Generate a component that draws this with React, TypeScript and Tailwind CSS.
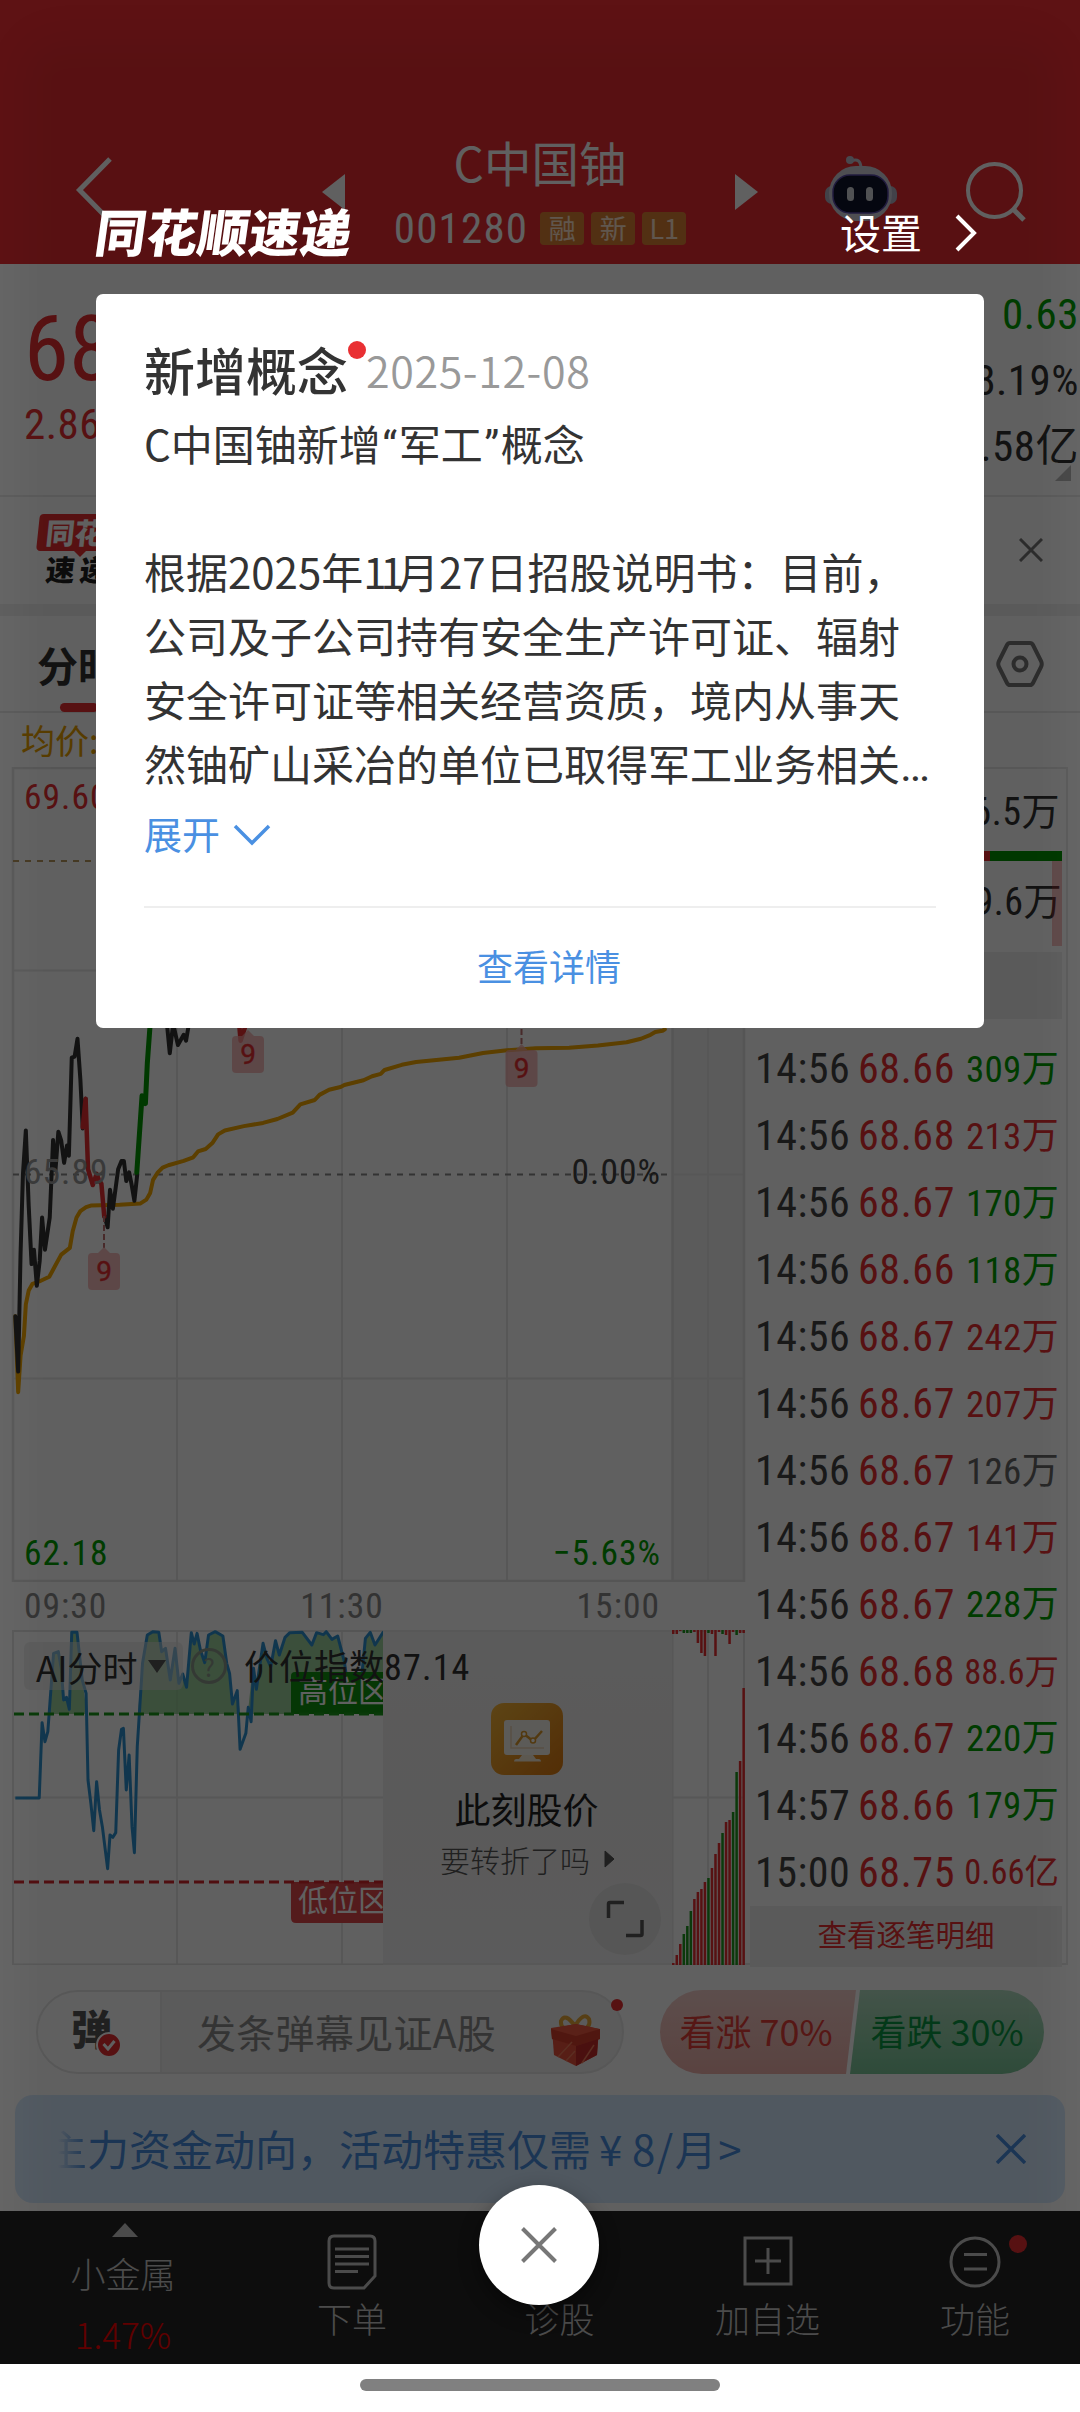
import React from "react";
import clsx from "clsx";

const trades = [
  { time: "14:56", price: "68.66", vol: "309", unit: "万", color: "text-[#00a000]" },
  { time: "14:56", price: "68.68", vol: "213", unit: "万", color: "text-[#e93033]" },
  { time: "14:56", price: "68.67", vol: "170", unit: "万", color: "text-[#00a000]" },
  { time: "14:56", price: "68.66", vol: "118", unit: "万", color: "text-[#00a000]" },
  { time: "14:56", price: "68.67", vol: "242", unit: "万", color: "text-[#e93033]" },
  { time: "14:56", price: "68.67", vol: "207", unit: "万", color: "text-[#e93033]" },
  { time: "14:56", price: "68.67", vol: "126", unit: "万", color: "text-[#666]" },
  { time: "14:56", price: "68.67", vol: "141", unit: "万", color: "text-[#e93033]" },
  { time: "14:56", price: "68.67", vol: "228", unit: "万", color: "text-[#00a000]" },
  { time: "14:56", price: "68.68", vol: "88.6", unit: "万", color: "text-[#e93033]" },
  { time: "14:56", price: "68.67", vol: "220", unit: "万", color: "text-[#00a000]" },
  { time: "14:57", price: "68.66", vol: "179", unit: "万", color: "text-[#00a000]" },
  { time: "15:00", price: "68.75", vol: "0.66", unit: "亿", color: "text-[#e93033]" },
];

const RED = "#e93033";
const GREEN = "#1f9a1f";

// heights of the auction volume bars, left to right
const bars = [2, 10, 21, 31, 39, 54, 66, 73, 76, 83, 87, 97, 111, 122, 132, 143, 145, 153, 193, 204, 277];
const barColors = "rrrgggrrrrgrrrgrrggrr";
const drops = [4, 4, 1, 3, 3, 3, 2, 13, 23, 26, 3, 4, 26, 2, 4, 5, 14, 2, 5, 3, 3];
const dropColors = "rrrgggrrrrgrrrgrrrgrr";

const num = "font-['Roboto','Noto_Sans_CJK_SC',sans-serif] font-normal [font-stretch:75%]";

const Marker = ({ x, y }: { x: number; y: number }) => (
  <g>
    <path
      d={`M${x - 12} ${y - 15}h6l6-6l6 6h6q4 0 4 4v29q0 4-4 4h-24q-4 0-4-4v-29q0-4 4-4z`}
      fill="#f4a9a9"
      fillOpacity=".75"
    />
    <text x={x} y={y + 13} textAnchor="middle" fontSize="28" fontFamily="Roboto, sans-serif" fill={RED} stroke={RED} strokeWidth=".4">
      9
    </text>
  </g>
);

const Header = () => (
  <header className="flex h-[264px] items-start bg-[#ec2d33]">
    <svg className="ml-[70px] mt-[150px] h-[80px] w-[50px]" viewBox="0 0 50 80" fill="none">
      <path d="M40 9L9.500 40L40 71" stroke="#fff" strokeWidth="5" />
    </svg>
    <div className="ml-[202px] flex w-[436px] items-start justify-between">
      <svg className="mt-[174px] h-9 w-[23px]" viewBox="0 0 23 36">
        <path d="M23 0v36L0 18z" fill="#fff" />
      </svg>
      <div className="mt-[137px] flex flex-col items-center text-white">
        <div className="text-[47.500px] leading-[50px]">C中国铀</div>
        <div className="mt-[14px] flex items-center gap-[7px]">
          <span className={clsx(num, "mr-[5px] text-[43px] leading-[54px] tracking-[1.2px]")}>001280</span>
          {["融", "新", "L1"].map((t) => (
            <span
              key={t}
              className="flex h-[33px] w-[44px] items-center justify-center rounded-[4px] bg-[#dd8336] pb-[2px] text-[27px] leading-none text-[#ffe6d0]"
            >
              {t}
            </span>
          ))}
        </div>
      </div>
      <svg className="mt-[174px] h-9 w-[23px]" viewBox="0 0 23 36">
        <path d="M0 0v36L23 18z" fill="#fff" />
      </svg>
    </div>
    <svg className="ml-[66px] mt-[150px] h-[76px] w-[76px]" viewBox="0 0 76 76" fill="none">
      <path d="M27 11q10-4 10 8" stroke="#c9c9d6" strokeWidth="3" />
      <circle cx="26" cy="10" r="4" fill="#c0c0d0" />
      <rect x="1" y="36" width="72" height="18" rx="7" fill="#b2b2c4" />
      <rect x="5" y="16" width="63" height="55" rx="27" fill="#d0d0dc" />
      <rect x="9" y="25" width="55" height="38" rx="17" fill="#10142c" stroke="#5a4aa8" strokeWidth="1.500" />
      <rect x="23" y="37" width="7" height="14" rx="3.500" fill="#d8dadf" />
      <rect x="42" y="37" width="7" height="14" rx="3.500" fill="#d8dadf" />
    </svg>
    <svg className="ml-[66px] mt-[158px] h-16 w-16" viewBox="0 0 64 64" fill="none">
      <circle cx="28.500" cy="32.500" r="26.500" stroke="#fff" strokeWidth="4" />
      <path d="M47 51l11 11" stroke="#fff" strokeWidth="5" />
    </svg>
  </header>
);

const Quote = () => (
  <section className="bg-white">
    <div className="flex h-[233px] justify-between border-b-2 border-[#ececec] pl-[24px] pr-[26px]">
      <div className={clsx(num, "text-[#e93033]")}>
        <div className="mt-[33px] text-[91px] leading-[104px]">68.75</div>
        <div className="mt-[-2px] text-[43px] leading-[50px] tracking-[0.500px]">2.86 4.34%</div>
      </div>
      <div className={clsx(num, "-mr-[25px] mt-[17px] flex flex-col items-end text-[43px] leading-[66px] tracking-[0.500px] text-[#333]")}>
        <span className="text-[#00a000]">0.63</span>
        <span>18.19%</span>
        <span>38.58亿</span>
        <svg className="-mt-[14px] mr-[8px] h-4 w-4" viewBox="0 0 16 16">
          <path d="M16 0v16H0z" fill="#b9b9b9" />
        </svg>
      </div>
    </div>
    <div className="flex h-[107px] items-start justify-between pl-[38px] pr-[37px]">
      <div className="mt-[17px] text-[29px] font-black leading-none">
        <div className="flex h-[37px] w-[110px] -skew-x-6 items-center rounded-[4px] bg-[#e93033] pb-[3px] pl-[8px] text-white">
          同花顺
        </div>
        <svg className="ml-[36px] h-[6px] w-[12px]" viewBox="0 0 12 6">
          <path d="M0 0h12L6 6z" fill={RED} />
        </svg>
        <div className="-mt-[3px] ml-[8px] flex -skew-x-6 gap-[5px] text-[#222]">
          <span>速</span>
          <span>递</span>
        </div>
      </div>
      <svg className="mt-[41px] h-[24px] w-[24px]" viewBox="0 0 24 24">
        <path d="M1 1l22 22M23 1L1 23" stroke="#777" strokeWidth="3" />
      </svg>
    </div>
    <div className="h-3 bg-[#f0f0f0]" />
    <div className="flex h-[97px] items-start justify-between border-b-2 border-[#e8e8e8] pl-[37px] pr-[36px]">
      <div className="mt-[25px]">
        <div className="text-[41px] font-bold leading-[46px] text-[#333]">分时</div>
        <div className="ml-[23px] mt-[16px] h-[9px] w-[38px] rounded-full bg-[#e93033]" />
      </div>
      <svg className="mt-[24px] h-[48px] w-[48px]" viewBox="0 0 48 48" fill="none" stroke="#777" strokeWidth="4">
        <path d="M14 3h20q2 0 3 2l8 16q1.500 3 0 6l-8 16q-1 2-3 2H14q-2 0-3-2L3 27q-1.500-3 0-6l8-16q1-2 3-2z" />
        <circle cx="24" cy="24" r="6.500" />
      </svg>
    </div>
    <div className="flex h-[54px] items-center pl-[21px] text-[34px] leading-none text-[#e8a000]">均价:68.04</div>
  </section>
);

const PriceChart = () => (
  <div className="relative h-[815px]">
    <svg className="block h-[815px] w-[746px]" viewBox="0 767 746 815" fill="none">
      <rect x="672" y="767" width="72" height="814" fill="#f2f2f2" />
      <path
        d="M13 970.500H744M13 1378.500H744M672 1174.500H744M177 767V1581M342 767V1581M507 767V1581M708 767V1581"
        stroke="#e8e8e8"
        strokeWidth="2"
      />
      <path d="M13 768H744V1581H13zM672.500 767V1581" stroke="#e4e4e4" strokeWidth="2.500" />
      <path d="M13 861H672" stroke="#b99a60" strokeWidth="2" strokeDasharray="6 6" />
      <path d="M13 1174.500H668" stroke="#8a8a8a" strokeWidth="2" strokeDasharray="6 6" />
      <g transform="translate(0 1000) scale(.4783 .3953)" strokeLinejoin="round" strokeLinecap="round">
        <path
          vectorEffect="non-scaling-stroke"
          stroke="#f5a700"
          strokeWidth="4"
          d="M32 800L38 992L43 900L50 850L54 770L60 735L68 718L82 712L103 700L112 680L128 644L146 627L152 585L160 550L168 534L180 524L190 520L250 518L293 515L306 505L314 488L320 455L330 436L340 424L352 418L384 407L404 398L414 383L430 377L444 362L456 340L470 330L510 319L550 311L580 301L612 285L628 264L658 253L668 240L688 227L712 220L720 215L760 203L778 193L796 187L804 177L840 164L870 157L960 146L1010 134L1060 127L1120 122L1190 121L1250 115L1310 107L1340 98L1360 88L1370 81L1385 78L1390 74"
        />
        <path
          vectorEffect="non-scaling-stroke"
          stroke="#333"
          strokeWidth="4"
          d="M32 800L38 940L43 640L48 440L54 330L60 520L66 668L71 632L77 723L83 660L88 550L94 632L104 550L111 354L116 430L122 333L128 356L134 412L140 368L144 394L150 146L156 143L162 98L168 200L173 325L179 250M218 545L225 575L230 480L236 528L247 428L254 407L259 407L264 458L270 436L275 466L281 508L287 440M349 60L355 135L362 60L372 114L384 88L389 103L395 60"
        />
        <path vectorEffect="non-scaling-stroke" stroke={RED} strokeWidth="4.500" d="M173 322L179 250L184 428L194 468L202 440L207 456L212 465L218 548M500 60L503 103L512 70" />
        <path vectorEffect="non-scaling-stroke" stroke="#009a00" strokeWidth="5" d="M286 436L297 242L304 262L308 160L314 60" />
      </g>
      <path d="M104 1216v32M521.500 1020v25" stroke="#c07070" strokeWidth="2" strokeDasharray="6 3" />
      <Marker x={104} y={1268} />
      <Marker x={248} y={1051} />
      <Marker x={521.5} y={1065} />
    </svg>
    <div className={clsx(num, "absolute inset-0 text-[35.500px] leading-[40px] tracking-[1px]")}>
      <span className="absolute left-[24px] top-[10px] text-[#e93033]">69.60</span>
      <span className="absolute left-[24px] top-[385px] text-[#999]">65.89</span>
      <span className="absolute right-[83px] top-[385px] text-[#444]">0.00%</span>
      <span className="absolute left-[24px] top-[766px] text-[#00a000]">62.18</span>
      <span className="absolute right-[83px] top-[766px] text-[#00a000]">−5.63%</span>
    </div>
  </div>
);

const IndexChart = () => (
  <div className="relative flex h-[335px]">
    <svg className="block h-[335px] w-[383px] shrink-0" viewBox="0 1630 383 335" fill="none">
      <path d="M13 1797.500H383M177 1631V1965M342 1631V1965" stroke="#e8e8e8" strokeWidth="2" />
      <path d="M383 1631H13V1964.500H383" stroke="#e4e4e4" strokeWidth="2" />
      <g transform="translate(0 1600) scale(.4783 .3333)" strokeLinejoin="round">
        <path
          d="M104 342L112 160L122 155L128 205L133 300L139 297L145 328L150 97L161 97L166 140L172 240L182 342zM288 342L298 190L308 105L320 95L332 97L338 155L346 145L356 240L366 145L374 250L382 222L390 262L400 98L406 132L412 100L419 150L428 188L436 105L450 95L466 108L474 190L480 220L486 312L496 272L502 342zM518 342L528 205L536 268L550 130L558 175L566 200L576 122L584 165L596 112L606 98L632 97L652 135L662 98L676 104L682 95L694 118L706 108L720 185L728 270L750 320L764 115L774 97L784 135L802 95V342z"
          fill="#7fc27f"
          fillOpacity=".75"
        />
        <path
          vectorEffect="non-scaling-stroke"
          stroke="#2f92d0"
          strokeWidth="3"
          d="M32 594L82 594L88 368L94 425L100 395L112 160L122 155L128 205L133 300L139 292L145 328L150 97L161 97L172 240L180 280L184 540L190 610L196 692L202 545L208 630L214 680L225 806L230 705L236 712L242 698L248 450L254 388L258 385L264 570L270 465L276 680L281 758L287 440L298 190L308 105L320 95L332 97L338 155L346 145L356 240L366 145L374 250L382 222L390 262L400 98L406 132L412 100L419 150L428 188L436 105L450 95L466 108L474 190L480 220L486 312L496 272L502 448L514 400L519 322L525 365L530 205L536 268L550 130L558 175L566 200L576 122L584 165L596 112L606 98L632 97L652 135L662 98L676 104L682 95L694 118L706 108L720 185L728 270L750 320L764 115L774 97L784 135L802 95"
        />
      </g>
      <path d="M291 1714V1676q0-4 4-4H383V1714z" fill="#109410" />
      <path d="M291 1882V1918q0 5 5 5H383V1882z" fill="#e2494d" />
      <path d="M14 1714H383" stroke="#1b9a1b" strokeWidth="3" strokeDasharray="10 5" />
      <path d="M14 1882H383" stroke="#d8262c" strokeWidth="3" strokeDasharray="10 5" />
    </svg>
    <div className="absolute left-[298px] top-[38px] w-[85px] overflow-hidden whitespace-nowrap text-[30px] leading-[42px] text-white">
      高位区
    </div>
    <div className="absolute left-[298px] top-[247px] w-[85px] overflow-hidden whitespace-nowrap text-[30px] leading-[42px] text-white">
      低位区
    </div>
    <div className="flex w-[289px] shrink-0 flex-col items-center border-y-2 border-[#ececec] bg-gradient-to-b from-[#f3f3f3] via-[#f1efef] to-[#f3f3f4] pr-[2px]">
      <svg className="mt-[71px] h-[72px] w-[72px]" viewBox="0 0 72 72" fill="none">
        <defs>
          <linearGradient id="gold" x1="0" y1="0" x2="1" y2="1">
            <stop offset="0" stopColor="#f6b73a" />
            <stop offset="1" stopColor="#dd7a12" />
          </linearGradient>
        </defs>
        <rect width="72" height="72" rx="13" fill="url(#gold)" />
        <rect x="13" y="17" width="46" height="35" rx="3" fill="#f6f2ec" />
        <path d="M31 52h11l3 4h3q2 0 2 2.500h-27q0-2.500 2-2.500h3z" fill="#f6ead8" />
        <path d="M20 23v22h33" stroke="#ecd6b4" strokeWidth="1.500" />
        <path d="M25 42l8-11l9 7l9-10" stroke="#dd9a2c" strokeWidth="2.500" />
        <circle cx="33" cy="31" r="2.500" fill="#fff" stroke="#dd9a2c" strokeWidth="1.500" />
        <circle cx="42" cy="37.500" r="2.500" fill="#fff" stroke="#dd9a2c" strokeWidth="1.500" />
      </svg>
      <div className="mt-[9px] text-[36px] leading-[48px] text-[#222]">此刻股价</div>
      <div className="ml-[2px] mt-[5px] flex items-center gap-[14px] text-[30px] font-light leading-[44px] text-[#555]">
        要转折了吗
        <svg className="h-[18px] w-[11px]" viewBox="0 0 11 18">
          <path d="M1 1l9 8l-9 8z" fill="#555" stroke="#555" />
        </svg>
      </div>
    </div>
    <div className="absolute left-[589px] top-[253px] flex size-[72px] items-center justify-center rounded-full bg-[#e6e6e6]">
      <svg className="h-[38px] w-[38px]" viewBox="0 0 38 38" fill="none" stroke="#555" strokeWidth="3.500">
        <path d="M2.500 18V4q0-1.500 1.500-1.500H18M36 20V34q0 1.500-1.500 1.500H20" />
      </svg>
    </div>
    <svg className="block h-[335px] w-[73px] shrink-0" viewBox="0 0 73 335">
      <path d="M0 167.500H72M36 0V335M.5 0V335" stroke="#e8e8e8" strokeWidth="2" />
      <path d="M0 1H74M0 334.500H74M72 0V335" stroke="#e4e4e4" strokeWidth="2" />
      {bars.map((h, i) => (
        <rect key={i} x={i * 3.52} y={335 - h} width="2.500" height={h} fill={barColors[i] === "r" ? RED : GREEN} />
      ))}
      {drops.map((h, i) => (
        <rect key={i} x={i * 3.52} y="0" width="2.500" height={h} fill={dropColors[i] === "r" ? RED : GREEN} />
      ))}
    </svg>
    <div className="absolute left-[24px] top-[12px] flex h-[48px] items-center text-[35px] leading-none text-[#333]">
      <div className="flex h-[48px] w-[159px] items-center gap-[10px] rounded-[6px] bg-[#e4e4e4]/50 pl-[12px]">
        AI分时
        <svg className="h-[13px] w-[18px]" viewBox="0 0 18 13">
          <path d="M0 0h18L9 13z" fill="#555" />
        </svg>
      </div>
      <div className="ml-[8px] flex size-[36px] items-center justify-center rounded-full border-[3px] border-[#8d9a8d] text-[25px] text-[#8d9a8d]">
        ?
      </div>
      <div className="ml-[17px] whitespace-nowrap">
        价位指数<span className={clsx(num, "text-[36px] tracking-[1.200px]")}>87.14</span>
      </div>
    </div>
  </div>
);

const TradeList = () => (
  <aside className="w-[324px] border-r-2 border-b-2 border-t-2 border-[#e8e8e8] pl-[6px] pr-[4px] text-[#333]">
    <div className={clsx(num, "flex h-[82px] items-center justify-end pr-[2px] pt-[5px] text-[38px] tracking-[0.500px]")}>266.5万</div>
    <div className="flex h-[10px]">
      <div className="w-[240px] bg-[#e93033]" />
      <div className="flex-1 bg-[#009400]" />
    </div>
    <div className="flex h-[85px] justify-end">
      <div className={clsx(num, "flex h-[82px] items-center text-[38px] tracking-[0.500px]")}>139.6万</div>
      <div className="-ml-[10px] w-[10px] bg-[#e93033]/30" />
    </div>
    <div className="mt-[6px] h-[67px] bg-[#f0f0f0]" />
    <div className="mt-[17px]">
      {trades.map((t, idx) => (
        <div key={idx} className={clsx(num, "flex h-[66.95px] items-center text-[42px] leading-none")}>
          <span className="w-[102px] pl-[5px] tracking-[0.500px] text-[#444]">{t.time}</span>
          <span className="w-[100px] pl-[6px] tracking-[0.600px] text-[#e93033]">{t.price}</span>
          <span
            className={clsx(
              t.color,
              "flex-1 whitespace-nowrap pr-[3px] text-right",
              t.vol.length > 3 ? "text-[34.500px]" : "text-[37px] tracking-[0.300px]"
            )}
          >
            {t.vol}
            {t.unit}
          </span>
        </div>
      ))}
    </div>
    <div className="flex h-[61px] items-center justify-center bg-[#f0f0f0] pb-[5px] text-[29.500px] leading-none text-[#e93033]">
      查看逐笔明细
    </div>
  </aside>
);

const DanmuBar = () => (
  <div className="flex h-[130px] items-start justify-between pl-[36px] pr-[36px] pt-[25px]">
    <div className="relative flex h-[84px] w-[588px] items-center rounded-full border-2 border-[#e9e9e9] bg-[#f2f2f2]">
      <div className="flex h-full w-[124px] items-center rounded-l-full border-r-2 border-[#ebebeb] bg-white pl-[33px]">
        <span className="relative -mt-[10px] text-[41px] font-black leading-none text-[#555]">
          弹
          <span className="absolute -bottom-[10px] -right-[10px] flex size-[26px] items-center justify-center rounded-full border-2 border-white bg-[#e93033]">
            <svg className="h-[12px] w-[14px]" viewBox="0 0 14 12" fill="none">
              <path d="M1.500 5l4.500 5l6.500-8" stroke="#fff" strokeWidth="3" />
            </svg>
          </span>
        </span>
      </div>
      <span className="-mt-[2px] ml-[35px] text-[39px] leading-none tracking-[0.300px] text-[#8c8c8c]">发条弹幕见证A股</span>
      <svg className="absolute left-[512px] top-[21px] h-[54px] w-[52px]" viewBox="0 0 52 54" fill="none">
        <path d="M25 16Q10 18 11 8Q15-1 25 13Q34-2 39 6Q42 18 25 16z" stroke="#e8a83a" strokeWidth="4" />
        <path d="M2 16l24-5l23 5l-2 26L26 53L4 42z" fill="#e8503c" />
        <path d="M1 15l25-4l24 5v10L26 33L2 26z" fill="#ef5a42" />
        <path d="M1 16l25 7l24-7v10L26 33L2 26z" fill="#d8402e" />
        <path d="M26 33L48 26l-1 16L26 53z" fill="#c62f2a" />
        <path d="M8 44l14-15M16 48l9-10M32 50l12-18" stroke="#f27a5a" strokeWidth="1.500" />
      </svg>
      <span className="absolute right-[-1px] top-[7px] size-3 rounded-full bg-[#e93033]" />
    </div>
    <div className="flex h-[84px] w-[384px] text-[36px] leading-none">
      <div className="flex flex-1 items-center justify-center rounded-l-full bg-gradient-to-b from-[#f6cfcb] to-[#efb3ad] pb-[4px] pr-[4px] text-[#e5403a] [clip-path:polygon(0_0,100%_0,calc(100%-10px)_100%,0_100%)]">
        看涨&nbsp;70%
      </div>
      <div className="-ml-[6px] flex w-[194px] items-center justify-center rounded-r-full bg-gradient-to-b from-[#b5e0c4] to-[#7cc79a] pb-[4px] text-[#0c9a44] [clip-path:polygon(10px_0,100%_0,100%_100%,0_100%)]">
        看跌&nbsp;30%
      </div>
    </div>
  </div>
);

const Banner = () => (
  <div className="mx-[15px] flex h-[108px] items-center justify-between rounded-[18px] bg-[#d8ebff] pl-[30px] pr-[39px] text-[#4a90e2]">
    <div className="-mt-[2px] flex whitespace-nowrap text-[42px] leading-none">
      <span className="bg-gradient-to-r from-[#4a90e2]/0 from-30% to-[#4a90e2] to-100% bg-clip-text text-transparent">主</span>
      力资金动向，活动特惠仅需
      <span className="w-[41px] pl-[8px]">¥</span>
      <span className="tracking-[1.500px]">8/月&gt;</span>
    </div>
    <svg className="h-[30px] w-[30px]" viewBox="0 0 30 30">
      <path d="M1 1l28 28M29 1L1 29" stroke="#4a90e2" strokeWidth="3.500" />
    </svg>
  </div>
);

const BottomNav = () => (
  <nav className="mt-[8px] flex h-[153px] bg-[#252525] text-[35px] font-light leading-[40px] text-[#c8c8c8]">
    <div className="flex w-[246px] flex-col items-center">
      <svg className="ml-1 mt-[12px] h-[14px] w-[26px]" viewBox="0 0 26 14">
        <path d="M13 0l13 14H0z" fill="#c8c8c8" />
      </svg>
      <span className="mt-[16px]">小金属</span>
      <span className="mt-[21px] text-[35px] text-[#f00]">1.47%</span>
    </div>
    <div className="flex w-[212px] flex-col items-center">
      <svg className="mt-[23px] h-[56px] w-[50px]" viewBox="0 0 50 56" fill="none" stroke="#c8c8c8" strokeWidth="3">
        <path d="M7 2H43q5 0 5 5V42L37 54H7q-5 0-5-5V7q0-5 5-5z" />
        <path d="M8 15H42M8 22.500H42M8 30H42M8 37.500H31" />
      </svg>
      <span className="mt-[8px]">下单</span>
    </div>
    <div className="flex w-[203px] flex-col items-center">
      <span className="mt-[87px]">诊股</span>
    </div>
    <div className="flex w-[213px] flex-col items-center">
      <svg className="mt-[25px] h-[50px] w-[50px]" viewBox="0 0 50 50" fill="none" stroke="#c8c8c8" strokeWidth="3">
        <path d="M2 2H48V48H2zM25 12V38M12 25H38" />
      </svg>
      <span className="mt-[12px]">加自选</span>
    </div>
    <div className="relative flex w-[202px] flex-col items-center">
      <svg className="mt-[25px] h-[52px] w-[52px]" viewBox="0 0 52 52" fill="none" stroke="#c8c8c8" strokeWidth="3">
        <circle cx="26" cy="26" r="24" />
        <path d="M15 18.500H38M15 33H38" />
      </svg>
      <span className="mt-[10px]">功能</span>
      <span className="absolute right-[49px] top-[24px] size-[18px] rounded-full bg-[#e93033]" />
    </div>
  </nav>
);

const Modal = () => (
  <div className="absolute inset-x-0 top-0 h-[2364px] overflow-hidden bg-black/60">
    <div className="absolute inset-x-[20px] bottom-[-60px] top-[36px] rounded-[40px] bg-black/6 blur-[18px]" />
    <div className="relative flex h-[294px] items-start justify-between pl-[92px] pr-[103px] pt-[200px] text-white">
      <div className="origin-bottom -skew-x-8 whitespace-nowrap text-[51px] font-black leading-[60px] tracking-[0.300px]">
        同花顺速递
      </div>
      <div className="mt-px flex items-center gap-[33px] text-[41px] leading-[60px]">
        设置
        <svg className="mt-[4px] h-[38px] w-[22px]" viewBox="0 0 22 38" fill="none">
          <path d="M2 2l17 17L2 36" stroke="#fff" strokeWidth="4" />
        </svg>
      </div>
    </div>
    <div className="relative mx-auto h-[734px] w-[888px] rounded-[7px] bg-white px-[48px] pt-[43px] text-[#333]">
      <div className="flex h-[64px] items-center">
        <span className="text-[51px] font-medium leading-none">新增概念</span>
        <span className="mb-[38px] size-[18px] rounded-full bg-[#e93033]" />
        <span className="text-[43px] font-[350] leading-none tracking-[0.600px] text-[#999]">2025-12-08</span>
      </div>
      <div className="mt-[10px] whitespace-nowrap text-[42px] leading-[64px]">
        <p>
          C中国铀新增<span className="px-[1.500px] font-['Roboto'] leading-none">“</span>军工
          <span className="px-[1.500px] font-['Roboto'] leading-none">”</span>概念
        </p>
        <p className="mt-[64px]">
          根据2025年<span className="-mr-px tracking-[-6px]">11</span>月27日招股说明书：目前，
        </p>
        <p>公司及子公司持有安全生产许可证、辐射</p>
        <p>安全许可证等相关经营资质，境内从事天</p>
        <p>
          然铀矿山采冶的单位已取得军工业务相关
          <span className="font-['Roboto'] text-[45px] leading-none">…</span>
        </p>
      </div>
      <div className="mt-[10px] flex h-[56px] items-center gap-[13px] text-[38px] leading-none text-[#4a90e2]">
        <span>展开</span>
        <svg className="mt-[4px] h-[22px] w-[38px]" viewBox="0 0 38 22" fill="none">
          <path d="M2 2l17 17L36 2" stroke="#4a90e2" strokeWidth="3.500" />
        </svg>
      </div>
      <div className="mt-[45px] h-[2px] bg-[#eee]" />
      <div className="ml-[18px] mt-[33px] text-center text-[36px] leading-[48px] text-[#4a90e2]">查看详情</div>
    </div>
    <button className="absolute left-[479px] top-[2185px] flex size-[120px] items-center justify-center rounded-full bg-white shadow-[0_8px_20px_rgba(0,0,0,0.45)]">
      <svg className="h-[36px] w-[36px]" viewBox="0 0 36 36">
        <path d="M1.500 1.500l33 33M34.500 1.500l-33 33" stroke="#777" strokeWidth="4" />
      </svg>
    </button>
  </div>
);

export default function App() {
  return (
    <div
      lang="zh-CN"
      className="relative h-[2412px] w-[1080px] overflow-hidden bg-white font-['Noto_Sans_CJK_SC',sans-serif]"
    >
      <Header />
      <Quote />
      <main className="flex h-[1198px]">
        <div className="w-[744px]">
          <PriceChart />
          <div
            className={clsx(
              num,
              "flex h-[48px] items-center justify-between pl-[24px] pr-[84px] pt-[2px] text-[35.500px] leading-none tracking-[1px] text-[#8a8a8a]"
            )}
          >
            <span>09:30</span>
            <span>11:30</span>
            <span>15:00</span>
          </div>
          <IndexChart />
        </div>
        <TradeList />
      </main>
      <DanmuBar />
      <Banner />
      <BottomNav />
      <div className="flex h-[48px] justify-center bg-white pt-[15px]">
        <div className="h-[12px] w-[360px] rounded-full bg-[#808080]" />
      </div>
      <Modal />
    </div>
  );
}
